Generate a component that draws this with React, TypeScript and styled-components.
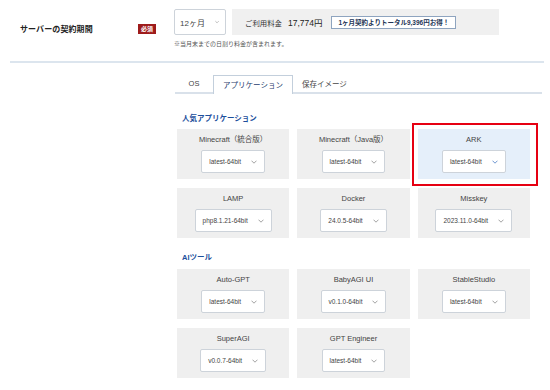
import React from "react";
import styled, { createGlobalStyle } from "styled-components";

const Global = createGlobalStyle`
  html, body { margin: 0; padding: 0; background: #fff; }
  body { font-family: "Liberation Sans", "Noto Sans CJK JP", sans-serif; color: #333; }
  * { box-sizing: border-box; }
`;

const Page = styled.div`
  width: 550px;
  height: 390px;
  padding-top: 9px;
  overflow: hidden;
`;

const TopRow = styled.div`
  display: flex;
  align-items: center;
  padding-left: 20px;
`;

const LabelCol = styled.div`
  width: 136px;
  display: flex;
  align-items: center;
  justify-content: space-between;
`;

const Label = styled.div`
  font-size: 8px;
  font-weight: bold;
  color: #222;
  letter-spacing: 0.1px;
`;

const Badge = styled.span`
  display: inline-block;
  width: 18px;
  height: 10px;
  line-height: 10px;
  text-align: center;
  background: #9e1b1b;
  color: #fff;
  font-size: 6px;
  font-weight: bold;
`;

const RightCol = styled.div`
  margin-left: 18px;
  display: flex;
  flex-direction: column;
`;

const PriceRow = styled.div`
  display: flex;
  gap: 6px;
`;

const Select = styled.div<{ $h: number; $fs: number; $accent?: boolean }>`
  display: inline-flex;
  align-items: center;
  justify-content: space-between;
  gap: 10px;
  height: ${(p) => p.$h}px;
  padding: 0 7px 0 7px;
  background: #fff;
  border: 1px solid #cdd3da;
  border-radius: 2px;
  font-size: ${(p) => p.$fs}px;
  color: #444;
  white-space: nowrap;
  svg { color: ${(p) => (p.$accent ? "#4a7cc4" : "#8a8a8a")}; }
`;

const MonthSelect = styled(Select)`
  width: 52px;
  padding: 0 6px 0 5px;
`;

const PriceBox = styled.div`
  width: 267px;
  height: 26px;
  background: #f0f0f0;
  display: flex;
  align-items: center;
  padding-left: 13px;
  gap: 6px;
`;

const PriceLabel = styled.span`
  font-size: 7.4px;
  color: #333;
`;

const PriceValue = styled.span`
  font-size: 8.5px;
  color: #222;
  margin-right: 3px;
`;

const Offer = styled.span`
  display: inline-flex;
  align-items: center;
  height: 13px;
  padding: 0 6px;
  background: #fff;
  border: 1px solid #8ea4bf;
  font-size: 6.5px;
  font-weight: bold;
  color: #223355;
  white-space: nowrap;
`;

const Note = styled.div`
  margin-top: 5px;
  font-size: 6px;
  line-height: 8px;
  color: #555;
`;

const Separator = styled.div`
  margin: 13px 6px 0 10px;
  height: 2px;
  background: #dce5ee;
`;

const TabBar = styled.div`
  margin: 12px 8px 0 175px;
  height: 19px;
  display: flex;
  align-items: flex-end;
  border-bottom: 2px solid #d9e1ea;
`;

const Tab = styled.div<{ $active?: boolean; $w?: number }>`
  height: ${(p) => (p.$active ? 19 : 17)}px;
  ${(p) => (p.$w ? `width: ${p.$w}px;` : "padding: 0 9px;")}
  display: flex;
  align-items: center;
  justify-content: center;
  font-size: 7.5px;
  margin-bottom: ${(p) => (p.$active ? -2 : 0)}px;
  color: ${(p) => (p.$active ? "#1f3d6e" : "#444")};
  background: #fff;
  border: ${(p) => (p.$active ? "1px solid #c3cfdc" : "none")};
  border-bottom: none;
  padding-bottom: ${(p) => (p.$active ? 2 : 0)}px;
`;

const Content = styled.div`
  margin-left: 177px;
  width: 353px;
`;

const Heading = styled.div<{ $mt: number; $mb: number }>`
  margin-top: ${(p) => p.$mt}px;
  margin-bottom: ${(p) => p.$mb}px;
  padding-left: 5px;
  height: 12px;
  line-height: 12px;
  font-size: 7.5px;
  font-weight: bold;
  color: #1d4f9c;
`;

const Grid = styled.div`
  display: grid;
  grid-template-columns: repeat(3, 1fr);
  column-gap: 8px;
  row-gap: 9px;
`;

const Card = styled.div<{ $selected?: boolean }>`
  position: relative;
  height: 50px;
  padding-top: 5px;
  display: flex;
  flex-direction: column;
  align-items: center;
  background: ${(p) => (p.$selected ? "#e5effa" : "#efefef")};
`;

const CardTitle = styled.div`
  height: 12px;
  line-height: 12px;
  font-size: 7.5px;
  color: #444;
  margin-bottom: 4px;
  white-space: nowrap;
`;

const Highlight = styled.div`
  position: absolute;
  top: -6px;
  left: -6px;
  right: -8px;
  bottom: -7px;
  border: 2px solid #e60012;
  pointer-events: none;
`;

const Chevron = () => (
  <svg width="6" height="4" viewBox="0 0 6 4" fill="none">
    <polyline points="0.5,0.7 3,3.2 5.5,0.7" stroke="currentColor" strokeWidth="0.8" />
  </svg>
);

type App = { name: string; ver: string; selected?: boolean };

const popular: App[] = [
  { name: "Minecraft（統合版）", ver: "latest-64bit" },
  { name: "Minecraft（Java版）", ver: "latest-64bit" },
  { name: "ARK", ver: "latest-64bit", selected: true },
  { name: "LAMP", ver: "php8.1.21-64bit" },
  { name: "Docker", ver: "24.0.5-64bit" },
  { name: "Misskey", ver: "2023.11.0-64bit" },
];

const ai: App[] = [
  { name: "Auto-GPT", ver: "latest-64bit" },
  { name: "BabyAGI UI", ver: "v0.1.0-64bit" },
  { name: "StableStudio", ver: "latest-64bit" },
  { name: "SuperAGI", ver: "v0.0.7-64bit" },
  { name: "GPT Engineer", ver: "latest-64bit" },
];

const AppCard = ({ app }: { app: App }) => (
  <Card $selected={app.selected}>
    <CardTitle>{app.name}</CardTitle>
    <Select $h={23} $fs={6.5} $accent={app.selected}>
      <span>{app.ver}</span>
      <Chevron />
    </Select>
    {app.selected && <Highlight />}
  </Card>
);

export default function AppRoot() {
  return (
    <Page>
      <Global />
      <TopRow>
        <LabelCol>
          <Label>サーバーの契約期間</Label>
          <Badge>必須</Badge>
        </LabelCol>
        <RightCol>
          <PriceRow>
            <MonthSelect $h={26} $fs={8}>
              <span>12ヶ月</span>
              <Chevron />
            </MonthSelect>
            <PriceBox>
              <PriceLabel>ご利用料金</PriceLabel>
              <PriceValue>17,774円</PriceValue>
              <Offer>1ヶ月契約よりトータル9,396円お得！</Offer>
            </PriceBox>
          </PriceRow>
          <Note>※当月末までの日割り料金が含まれます。</Note>
        </RightCol>
      </TopRow>
      <Separator />
      <TabBar>
        <Tab $w={38}>OS</Tab>
        <Tab $active $w={80}>アプリケーション</Tab>
        <Tab>保存イメージ</Tab>
      </TabBar>
      <Content>
        <Heading $mt={19} $mb={4}>人気アプリケーション</Heading>
        <Grid>
          {popular.map((a) => (
            <AppCard key={a.name} app={a} />
          ))}
        </Grid>
        <Heading $mt={14} $mb={5}>AIツール</Heading>
        <Grid>
          {ai.map((a) => (
            <AppCard key={a.name} app={a} />
          ))}
        </Grid>
      </Content>
    </Page>
  );
}
